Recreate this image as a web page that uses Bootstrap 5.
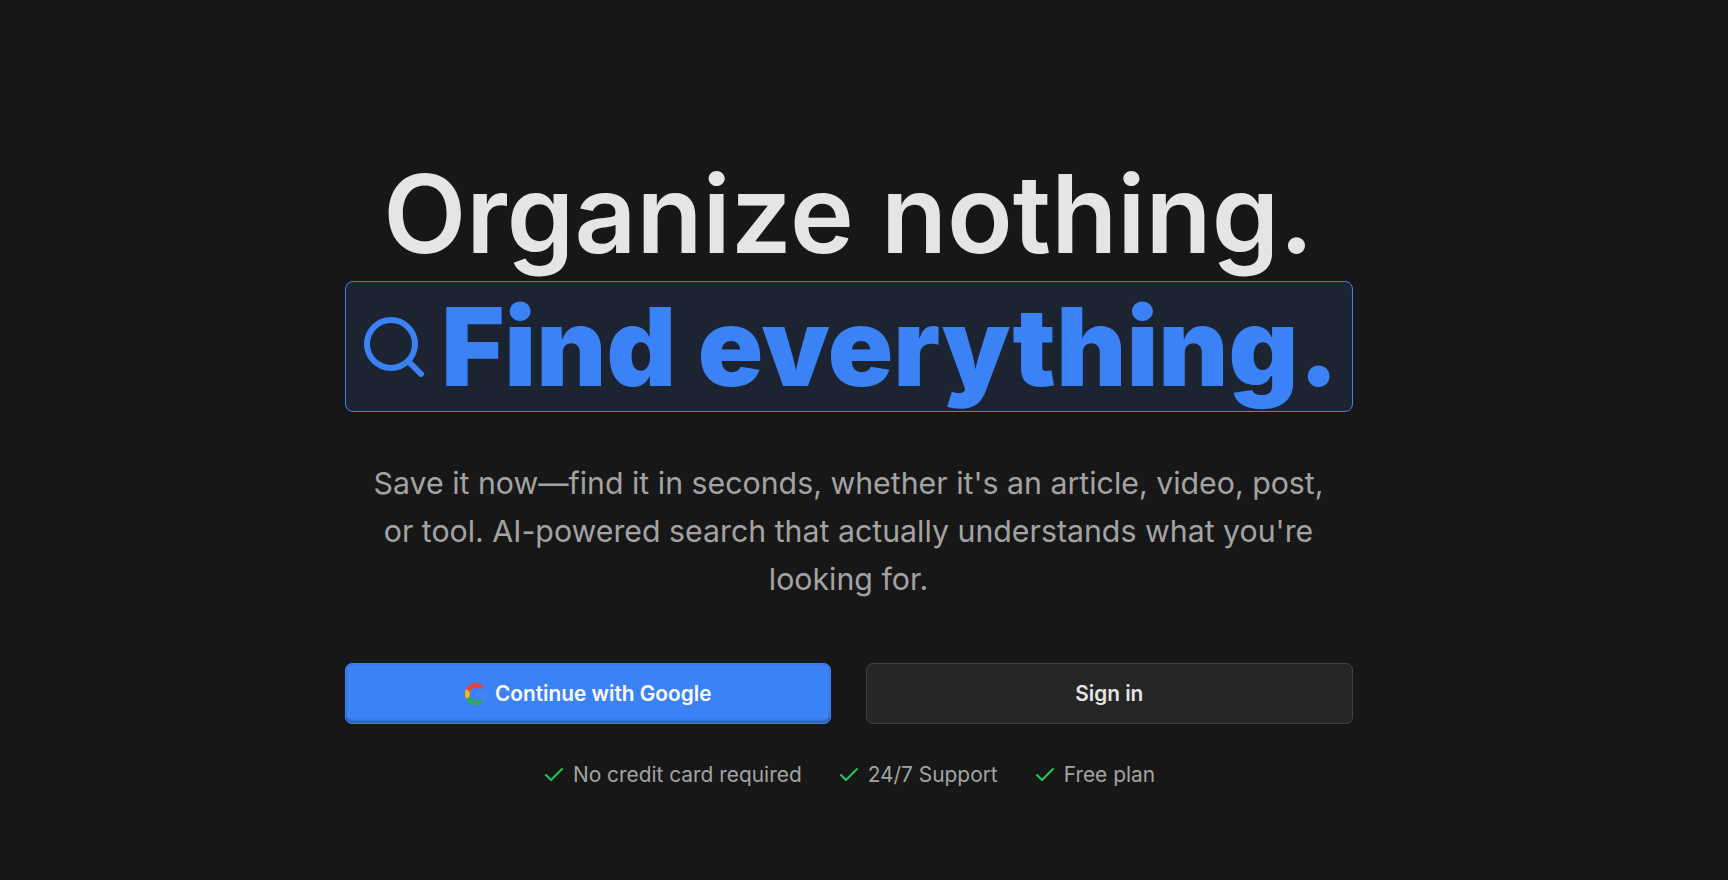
<!DOCTYPE html>
<html>
<head>
    <title>Organize nothing. Find everything.</title>
    <link href="https://cdn.jsdelivr.net/npm/bootstrap@5.3.0/dist/css/bootstrap.min.css" rel="stylesheet">
    <style>
        body {
            background-color: #171717;
            font-family: Inter, "Liberation Sans", sans-serif;
        }

        .page-shell {
            padding-right: 31px;
        }

        .hero-wrap {
            width: 1008px;
            padding-top: 148px;
        }

        .hero-title {
            font-size: 108px;
            font-weight: 600;
            line-height: 131px;
            color: #e5e5e5;
            margin-bottom: 0;
        }

        .find-box {
            height: 131px;
            margin-top: 2px;
            gap: 11px;
            background-color: #1c2331;
            border: 1px solid #3b82f6;
            border-radius: 8px;
            color: #3b82f6;
            font-size: 108px;
            font-weight: 900;
            line-height: 1;
            white-space: nowrap;
        }

        .hero-text {
            margin: 47px auto 0;
            width: 960px;
            font-size: 30.3px;
            line-height: 48px;
            color: #a3a3a3;
        }

        .cta-row {
            margin-top: 60px;
            gap: 35px;
        }

        .cta-btn {
            flex: 1 1 0;
            height: 61px;
            gap: 7px;
            font-size: 20.8px;
            font-weight: 600;
            border-radius: 7px;
        }

        .cta-primary,
        .cta-primary:hover {
            background-color: #3b82f6;
            border: 1px solid #3b82f6;
            box-shadow: inset 0 -3px 2px rgba(0, 0, 0, 0.2), inset 0 0 2px rgba(0, 0, 0, 0.25);
            color: #fff;
        }

        .cta-secondary,
        .cta-secondary:hover {
            background-color: #262626;
            border: 1px solid #404040;
            color: #e5e5e5;
        }

        .perk-row {
            margin-top: 35px;
            gap: 35px;
            font-size: 20.9px;
            color: #a3a3a3;
        }

        .perk-item {
            gap: 7px;
        }
    </style>
</head>
<body>
<main class="page-shell">
<div class="hero-wrap mx-auto text-center">
    <h1 class="hero-title">Organize nothing.</h1>
    <div class="find-box d-flex align-items-center justify-content-center">
        <svg width="72" height="72" viewBox="0 0 24 24" fill="none" stroke="currentColor" stroke-width="2" stroke-linecap="round" stroke-linejoin="round">
            <circle cx="11" cy="11" r="8"></circle>
            <path d="m21 21-4.3-4.3"></path>
        </svg>
        <span>Find everything.</span>
    </div>
    <p class="hero-text">Save it now—find it in seconds, whether it's an article, video, post, or tool. AI-powered search that actually understands what you're looking for.</p>
    <div class="cta-row d-flex">
        <button type="button" class="btn cta-btn cta-primary d-flex align-items-center justify-content-center">
            <svg width="24" height="24" viewBox="0 0 24 24">
                <path fill="#4285f4" d="M22.56 12.25c0-.78-.07-1.53-.2-2.25H12v4.26h5.92c-.26 1.37-1.04 2.53-2.21 3.31v2.77h3.57c2.08-1.92 3.28-4.74 3.28-8.09z"></path>
                <path fill="#34a853" d="M12 23c2.97 0 5.46-.98 7.28-2.66l-3.57-2.77c-.98.66-2.23 1.06-3.71 1.06-2.86 0-5.29-1.93-6.16-4.53H2.18v2.84C3.99 20.53 7.7 23 12 23z"></path>
                <path fill="#fbbc05" d="M5.84 14.09c-.22-.66-.35-1.36-.35-2.09s.13-1.43.35-2.09V7.07H2.18C1.43 8.55 1 10.22 1 12s.43 3.45 1.18 4.93l2.85-2.22.81-.62z"></path>
                <path fill="#ea4335" d="M12 5.38c1.62 0 3.06.56 4.21 1.64l3.15-3.15C17.45 2.09 14.97 1 12 1 7.7 1 3.99 3.47 2.18 7.07l3.66 2.84c.87-2.6 3.3-4.53 6.16-4.53z"></path>
            </svg>
            <span>Continue with Google</span>
        </button>
        <button type="button" class="btn cta-btn cta-secondary d-flex align-items-center justify-content-center">Sign in</button>
    </div>
    <div class="perk-row d-flex justify-content-center">
        <div class="perk-item d-flex align-items-center">
            <svg width="24" height="24" viewBox="0 0 24 24" fill="none" stroke="#22c55e" stroke-width="2" stroke-linecap="round" stroke-linejoin="round"><path d="M20 6 9 17l-5-5"></path></svg>
            <span>No credit card required</span>
        </div>
        <div class="perk-item d-flex align-items-center">
            <svg width="24" height="24" viewBox="0 0 24 24" fill="none" stroke="#22c55e" stroke-width="2" stroke-linecap="round" stroke-linejoin="round"><path d="M20 6 9 17l-5-5"></path></svg>
            <span>24/7 Support</span>
        </div>
        <div class="perk-item d-flex align-items-center">
            <svg width="24" height="24" viewBox="0 0 24 24" fill="none" stroke="#22c55e" stroke-width="2" stroke-linecap="round" stroke-linejoin="round"><path d="M20 6 9 17l-5-5"></path></svg>
            <span>Free plan</span>
        </div>
    </div>
</div>
</main>
<script src="https://cdn.jsdelivr.net/npm/bootstrap@5.3.0/dist/js/bootstrap.bundle.min.js"></script>
</body>
</html>
